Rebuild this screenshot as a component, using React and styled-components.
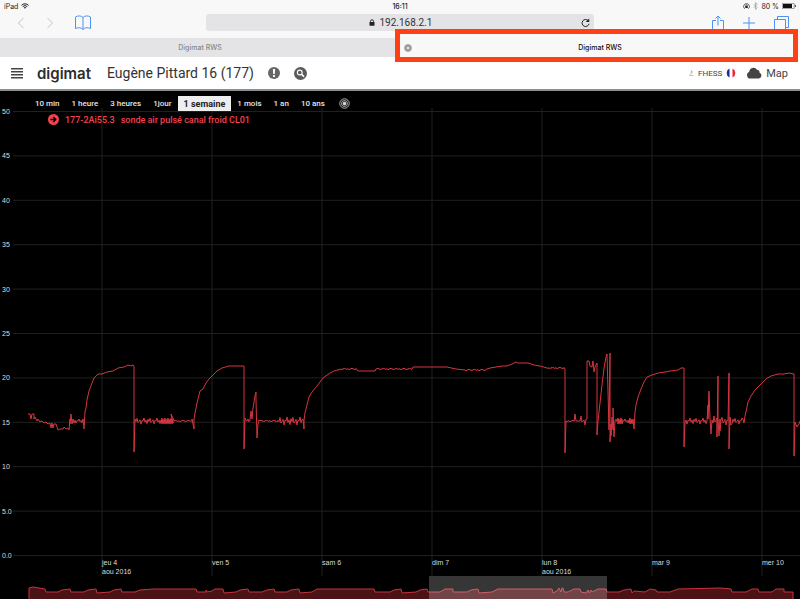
import React from 'react';
import styled, { createGlobalStyle, css } from 'styled-components';

const GlobalStyle = createGlobalStyle`
    * {
        box-sizing: border-box;
    }

    html {
        background: #000;
    }

    body {
        margin: 0;
        overflow: hidden;
        font-family: Roboto, "Liberation Sans", sans-serif;
        color: #333;
    }

    button, input {
        font-family: inherit;
        border: 0;
        padding: 0;
        margin: 0;
        background: none;
        color: inherit;
    }

    svg {
        display: block;
        flex: none;
    }
`;

const RANGES = ['10 min', '1 heure', '3 heures', '1jour', '1 semaine', '1 mois', '1 an', '10 ans'];

const DAYS = [
    { x: 102, label: 'jeu 4', month: 'aou 2016' },
    { x: 212, label: 'ven 5' },
    { x: 322, label: 'sam 6' },
    { x: 432, label: 'dim 7' },
    { x: 542, label: 'lun 8', month: 'aou 2016' },
    { x: 652, label: 'mar 9' },
    { x: 762, label: 'mer 10' },
];

const LEVELS = ['50', '45', '40', '35', '30', '25', '20', '15', '10', '5.0', '0.0'];

// small fluctuations of the sensor between x0 and x1
function ripple(x0, x1, y, amp, step = 1) {
    const wave = [0, -1, 0.4, -0.3, 0.9, -0.6, 0.2, -0.9, 0.5, 0.1, -0.4, 1, -0.2];
    let out = '';
    for (let x = x0, i = x0; x <= x1; x += step, i += 1) {
        out += ` ${x},${(y + wave[i % wave.length] * amp).toFixed(1)}`;
    }
    return out;
}

function dense(x0, x1, y, amp) {
    let out = '';
    for (let x = x0; x <= x1; x += 1) {
        out += ` ${x},${y - amp + (x % 3)} ${x},${y + amp - (x % 2)}`;
    }
    return out;
}

const SERIES = [
    '28,414 30,414 31,419 32,414 34,414 34,419 35,417 37,421 38,419 40,422 42,421 44,423 46,422 48,424 50,423 51,428 52,423 53,428 54,424 56,424 58,430 60,429 63,429 64,427 66,429 68,428 69,430 70,419 70,424 71,414 72,424 73,419 74,423',
    ripple(75, 82, 421, 2),
    '83,419 84,429 85,412 86,408 87,400 89,391 92,383 94,378 96,376 98,374 102,374 107,372 113,371 118,368 124,367 128,365 131,366 133,365 134,366 134,452 135,419',
    ripple(136, 160, 421, 3),
    dense(161, 173, 421, 3),
    '171,414',
    ripple(174, 192, 421, 1),
    '192,419 193,424 194,429 194,419 195,413 197,403 199,395 200,391 203,389 206,383 209,379 212,376 217,371 222,368 229,366 236,366 244,366 244,449 245,418',
    ripple(246, 249, 421, 2),
    '250,420 251,411 252,419 253,408 254,402 255,396 256,392 256,400 257,438 258,424 259,420',
    ripple(260, 278, 421, 1),
    ripple(279, 302, 421, 4),
    '303,419 304,429 304,420 305,413 307,405 309,397 312,392 317,386 323,378 330,373 334,371 341,369',
    ripple(342, 356, 369, 1),
    '358,371 375,371',
    ripple(376, 412, 369, 1),
    '413,367 440,367 447,367 456,369 465,370',
    ripple(466, 486, 370, 1),
    '490,368 496,367 502,366 507,366 512,364 516,362 518,363 528,363 534,365 540,366 547,368',
    ripple(548, 564, 368, 1),
    '565,369 565,453 566,421',
    ripple(567, 574, 421, 1),
    '575,414 576,421 580,421 581,416 582,422 584,420 585,425 586,419 587,419 587,361 589,361 590,366 592,367 593,361 594,372 595,367 597,363 597,380 597,435 598,421 600,403 602,385 604,368 606,357 607,354 608,392 609,430 609,421 610,353 610,442 611,424 611,436 612,417 613,430 613,408 614,437 615,421',
    ripple(616, 617, 421, 3),
    dense(618, 622, 421, 3),
    ripple(623, 628, 421, 2),
    dense(629, 632, 421, 3),
    '633,419 634,429 635,412 636,405 638,397 641,389 644,382 647,377 652,375 658,373 665,372 670,371 678,370 681,368 684,368 684,447 685,423 686,420',
    ripple(687, 706, 421, 3),
    '707,421 708,405 708,419 709,391 710,418 711,434 712,420 713,423 714,416 715,422 717,418 717,437 718,376 718,417 719,436 720,419 720,431 721,420',
    ripple(722, 728, 421, 4),
    '729,373 729,449 730,417 731,425',
    ripple(732, 742, 421, 3),
    '743,419 744,423 745,416 747,407 748,402 751,396 755,390 760,385 766,379 771,376 778,374 784,374 789,373 794,374 794,456 795,422 797,427 799,424 800,421',
].join(' ');

const OVERVIEW = `29,588 33,587 45,589 46,592 58,592 62,590 70,589 71,592 84,592 88,590 96,589 97,593
    110,592 114,590 121,589 122,592 135,592 140,590 153,589 196,589 197,592 206,592 206,590 207,592 212,591
    215,589 223,589 224,593 236,592 240,590 248,589 249,592 262,592 267,590 274,589 275,592 287,592 291,590
    299,589 300,593 312,592 317,589 374,589 375,592 390,592 394,590 401,589 402,593 416,592 420,590 427,589
    428,592 440,592 445,589 453,589 453,592 467,592 471,590 478,589 479,593 492,592 498,589 552,589 553,593
    557,591 559,588 561,592 562,588 563,588 564,592 568,592 574,589 580,589 581,592 586,593 588,590 589,593
    591,590 592,592 598,589 606,589 607,592 619,592 624,590 631,589 632,593 634,591 645,592 650,589 656,590
    657,592 670,592 678,589 720,588 731,589 732,592 746,592 752,589 758,589 759,592 772,592 776,589 784,589
    784,592 793,592`;

function StatusBar() {
    return (
        <StatusBarStyled>
            <StatusGroup>
                iPad
                <svg width="8" height="6" viewBox="0 0 16 12" fill="none" stroke="#222" strokeWidth="2">
                    <path d="M1 4.5a10 10 0 0 1 14 0M3.5 7.2a6.4 6.4 0 0 1 9 0" />
                    <path d="M5.5 9a3.6 3.6 0 0 1 5 0L8 11.6z" fill="#222" stroke="none" />
                </svg>
            </StatusGroup>
            <Clock>16:11</Clock>
            <StatusGroup $end>
                <svg width="7" height="7" viewBox="0 0 14 14" fill="none" stroke="#222" strokeWidth="1.4">
                    <path d="M3.5 11.6A5.8 5.8 0 1 1 10.5 11.6" />
                    <rect x="4.5" y="6" width="5" height="4" fill="#222" stroke="none" />
                    <path d="M5.5 6V5a1.5 1.5 0 0 1 3 0v1" />
                </svg>
                <svg width="5" height="8" viewBox="0 0 10 16" fill="none" stroke="#999" strokeWidth="1.4">
                    <path d="M1.5 4.5l7 7L5 15V1l3.5 3.5-7 7" />
                </svg>
                80 %
                <svg width="14" height="6" viewBox="0 0 28 12">
                    <rect x="0.5" y="0.5" width="24" height="11" rx="2" fill="none" stroke="#222" />
                    <rect x="2" y="2" width="18" height="8" fill="#111" />
                    <path d="M26 4v4l2-1V5z" fill="#222" />
                </svg>
            </StatusGroup>
        </StatusBarStyled>
    );
}

function BrowserBar() {
    return (
        <BrowserBarStyled>
            <NavButtons>
                <IconButton aria-label="Back">
                    <svg width="8" height="12" viewBox="0 0 8 12" fill="none" stroke="#c4c4c6">
                        <path d="M6.5 1L1.5 6l5 5" />
                    </svg>
                </IconButton>
                <IconButton aria-label="Forward">
                    <svg width="8" height="12" viewBox="0 0 8 12" fill="none" stroke="#c4c4c6">
                        <path d="M1.5 1l5 5-5 5" />
                    </svg>
                </IconButton>
                <IconButton aria-label="Bookmarks">
                    <svg width="16" height="16" viewBox="0 0 16 16" fill="none" stroke="#4a93f5">
                        <path d="M8 2.500C6.500.5 2.500.5.5 2v11.500C3 12.300 6.500 12.300 8 14.500c1.500-2.200 5-2.200 7.500-1V2C13.500.5 9.500.5 8 2.500zv12" />
                    </svg>
                </IconButton>
            </NavButtons>
            <AddressBar>
                <svg width="6" height="7" viewBox="0 0 12 14">
                    <rect x="1" y="6" width="10" height="7.5" rx="1" fill="#222" />
                    <path d="M3 7V4.5a3 3 0 0 1 6 0V7" fill="none" stroke="#222" strokeWidth="1.8" />
                </svg>
                <AddressInput aria-label="Address" defaultValue="192.168.2.1" />
                <Reload aria-label="Reload">
                    <svg width="9" height="10" viewBox="0 0 18 20" fill="none" stroke="#222" strokeWidth="2">
                        <path d="M14.5 5.5a7 7 0 1 0 1.5 6" />
                        <path d="M16.5 1v7h-7z" fill="#222" stroke="none" />
                    </svg>
                </Reload>
            </AddressBar>
            <PageActions>
                <IconButton aria-label="Share">
                    <svg width="12" height="16" viewBox="0 0 12 16" fill="none" stroke="#4a93f5">
                        <path d="M4 5.5H.5v10h11v-10H8M6 10.5V1M3.5 3.5L6 1l2.5 2.5" />
                    </svg>
                </IconButton>
                <IconButton aria-label="New tab">
                    <svg width="12" height="12" viewBox="0 0 12 12" fill="none" stroke="#4a93f5">
                        <path d="M6 0v12M0 6h12" />
                    </svg>
                </IconButton>
                <IconButton aria-label="Show tabs">
                    <svg width="15" height="15" viewBox="0 0 15 15" fill="none" stroke="#4a93f5">
                        <path d="M.5 3.5h11v11H.5zM3.5 3.5v-3h11v11h-3" />
                    </svg>
                </IconButton>
            </PageActions>
        </BrowserBarStyled>
    );
}

function Header() {
    return (
        <HeaderStyled>
            <IconButton aria-label="Menu">
                <svg width="12" height="12" viewBox="0 0 24 24" fill="#444">
                    <path d="M0 2h24v3H0zM0 8h24v3H0zM0 14h24v3H0zM0 20h24v3H0z" />
                </svg>
            </IconButton>
            <Logo>digimat</Logo>
            <Title>Eugène Pittard 16 (177)</Title>
            <HeaderTools>
                <IconButton aria-label="Alerts">
                    <svg width="12" height="12" viewBox="0 0 24 24">
                        <circle cx="12" cy="12" r="12" fill="#666" />
                        <path d="M9.8 4h4.4l-.6 10h-3.2zM10.2 16h3.600v4h-3.6z" fill="#fff" />
                    </svg>
                </IconButton>
                <IconButton aria-label="Search">
                    <svg width="13" height="13" viewBox="0 0 26 26" fill="none" stroke="#fff">
                        <circle cx="13" cy="13" r="13" fill="#5a5a5a" stroke="none" />
                        <circle cx="11.5" cy="11" r="4.8" strokeWidth="2.2" />
                        <path d="M15 14.5l5 5" strokeWidth="3.4" />
                    </svg>
                </IconButton>
            </HeaderTools>
            <User>
                <svg width="5" height="6" viewBox="0 0 10 12" fill="none" stroke="#aaa" strokeWidth="1.4">
                    <path d="M5 1v5M5 1l2 3-2 3M5 6L1 11h8" />
                </svg>
                <span>FHESS</span>
                <svg width="10" height="10" viewBox="0 0 20 20">
                    <path d="M7 1a10 10 0 0 0 0 18z" fill="#1b2a8c" />
                    <path d="M13 1a10 10 0 0 1 0 18z" fill="#ee2436" />
                </svg>
            </User>
            <MapLink href="#map">
                <svg width="15" height="12" viewBox="0 0 30 24" fill="#444">
                    <path d="M7 23a7 7 0 0 1-2.5-13.5A8.5 8.5 0 0 1 20 5.5a5 5 0 0 1 5 6A6 6 0 0 1 24 23z" />
                </svg>
                Map
            </MapLink>
        </HeaderStyled>
    );
}

function Chart() {
    return (
        <ChartSvg viewBox="0 91 800 508" role="img" aria-label="sonde air pulsé canal froid CL01">
            <GridLines>
                {LEVELS.map((level, i) => (
                    <line key={level} x1="13" x2="800" y1={111.5 + i * 44.4} y2={111.5 + i * 44.4} />
                ))}
                {DAYS.map((day) => (
                    <line key={day.x} x1={day.x} x2={day.x} y1="108" y2="576" />
                ))}
            </GridLines>
            {LEVELS.map((level, i) => (
                <AxisText key={level} x="2" y={114 + i * 44.4}>{level}</AxisText>
            ))}
            {DAYS.map((day) => (
                <AxisText key={day.x} x={day.x} y="565">
                    {day.label}
                    {day.month && <tspan x={day.x} y="574">{day.month}</tspan>}
                </AxisText>
            ))}
            <Curve points={SERIES} />
            <OverviewArea points={`29,599 ${OVERVIEW} 793,599`} />
            <OverviewLine points={`29,599 ${OVERVIEW} 793,599`} />
            <rect x="429" y="576" width="178" height="23" fill="#fff" fillOpacity="0.21" />
        </ChartSvg>
    );
}

export default function App() {
    return (
        <>
            <GlobalStyle />
            <Chrome>
                <StatusBar />
                <BrowserBar />
                <Tabs>
                    <Tab>
                        <TabButton>Digimat RWS</TabButton>
                    </Tab>
                    <Tab $active>
                        <CloseTab aria-label="Close tab">
                            <svg width="8" height="8" viewBox="0 0 16 16">
                                <circle cx="8" cy="8" r="7.5" fill="#999" />
                                <path d="M5 5l6 6M11 5l-6 6" stroke="#f7f7f7" strokeWidth="1.6" />
                            </svg>
                        </CloseTab>
                        <TabButton>Digimat RWS</TabButton>
                        <TabFrame />
                    </Tab>
                </Tabs>
            </Chrome>
            <Header />
            <Panel>
                <Chart />
                <PanelOverlay>
                    <Ranges>
                        {RANGES.map((range) => (
                            <RangeButton key={range} $active={range === '1 semaine'}>{range}</RangeButton>
                        ))}
                        <TargetButton aria-label="Now">
                            <svg width="11" height="11" viewBox="0 0 22 22" fill="none" stroke="#ddd" strokeWidth="1.6">
                                <circle cx="11" cy="11" r="9.5" />
                                <circle cx="11" cy="11" r="6" />
                                <circle cx="11" cy="11" r="3" fill="#ddd" />
                            </svg>
                        </TargetButton>
                    </Ranges>
                    <Legend>
                        <svg width="11" height="11" viewBox="0 0 22 22">
                            <circle cx="11" cy="11" r="11" fill="#f5404f" />
                            <path d="M5 11h10M10.5 6l5 5-5 5" fill="none" stroke="#000" strokeWidth="2.8" />
                        </svg>
                        <span>177-2Ai55.3</span>
                        <span>sonde air pulsé canal froid CL01</span>
                    </Legend>
                </PanelOverlay>
            </Panel>
        </>
    );
}

const Chrome = styled.div`
    background: #f8f8f8;
`;

const StatusBarStyled = styled.div`
    display: grid;
    grid-template-columns: 1fr auto 1fr;
    align-items: center;
    height: 12px;
    padding: 0 4px;
    font-family: Inter, sans-serif;
    font-size: 7px;
    color: #222;
`;

const StatusGroup = styled.div`
    display: flex;
    align-items: center;
    gap: 3px;
    justify-content: ${(p) => (p.$end ? 'flex-end' : 'flex-start')};
`;

const Clock = styled.div`
    font-weight: 500;
`;

const BrowserBarStyled = styled.div`
    display: grid;
    grid-template-columns: 1fr 2fr 1fr;
    height: 26px;
    padding: 2px 0 6px;
`;

const IconButton = styled.button`
    display: flex;
    align-items: center;
    justify-content: center;
    cursor: pointer;
`;

const NavButtons = styled.div`
    display: flex;
    align-items: center;
    gap: 21px;
    padding-left: 17px;
`;

const PageActions = styled.div`
    display: flex;
    align-items: center;
    justify-content: flex-end;
    gap: 19px;
    padding-right: 11px;
`;

const AddressBar = styled.div`
    position: relative;
    display: flex;
    align-items: center;
    justify-content: center;
    gap: 5px;
    height: 17px;
    margin: 0 6px;
    border-radius: 3px;
    background: #e4e4e6;
    font-size: 10px;
`;

const AddressInput = styled.input`
    width: 52px;
    font-size: 10px;
    outline: none;
`;

const Reload = styled(IconButton)`
    position: absolute;
    right: 4px;
`;

const Tabs = styled.div`
    display: flex;
`;

const Tab = styled.div`
    position: relative;
    flex: 1;
    display: flex;
    align-items: center;
    height: 19px;
    color: #888;
    background: #e4e4e6;

    ${(p) => p.$active && css`
        color: #111;
        background: #f8f8f8;
    `}
`;

const TabButton = styled.button`
    flex: 1;
    font-family: Inter, sans-serif;
    font-size: 7px;
    font-weight: ${(p) => (p.$active ? 600 : 500)};
    cursor: pointer;
`;

const CloseTab = styled(IconButton)`
    position: absolute;
    left: 4px;
`;

const TabFrame = styled.div`
    position: absolute;
    z-index: 2;
    top: -9px;
    right: 2px;
    bottom: -5px;
    left: -5px;
    border: 5px solid #ff3f14;
    pointer-events: none;
`;

const HeaderStyled = styled.header`
    display: flex;
    align-items: center;
    height: 34px;
    padding: 0 12px 0 11px;
    background: #fff;
    border-bottom: 2px solid #8a8f8f;
`;

const Logo = styled.div`
    margin: 0 16px 0 14px;
    font-family: Inter, sans-serif;
    font-size: 15px;
    font-weight: 600;
    color: #2c2c2c;
`;

const Title = styled.h1`
    margin: 0;
    font-size: 14px;
    font-weight: 400;
    white-space: nowrap;
`;

const HeaderTools = styled.div`
    display: flex;
    gap: 14px;
    margin-left: 14px;
`;

const User = styled.div`
    display: flex;
    align-items: center;
    gap: 4px;
    margin-left: auto;
    font-size: 8px;
    color: #444;
`;

const MapLink = styled.a`
    display: flex;
    align-items: center;
    gap: 4px;
    margin-left: 11px;
    font-size: 11px;
    color: #444;
    text-decoration: none;
`;

const Panel = styled.main`
    position: relative;
    background: #000;
`;

const ChartSvg = styled.svg`
    width: 100%;
`;

const GridLines = styled.g`
    stroke: #202020;
    stroke-width: 1;
`;

const AxisText = styled.text`
    font-family: "Liberation Sans", Arial, sans-serif;
    font-size: 7px;
    fill: #ddd;
`;

const Curve = styled.polyline`
    fill: none;
    stroke: #d53640;
    stroke-width: 1;
    stroke-linejoin: bevel;
`;

const OverviewArea = styled.polygon`
    fill: #4c1317;
`;

const OverviewLine = styled.polyline`
    fill: none;
    stroke: #c9333d;
`;

const PanelOverlay = styled.div`
    position: absolute;
    top: 5px;
    left: 29px;
`;

const Ranges = styled.div`
    display: flex;
    align-items: center;
`;

const RangeButton = styled.button`
    height: 15px;
    padding: 0 6px;
    font-size: 8px;
    font-weight: 500;
    color: #e6e6e6;
    white-space: nowrap;
    cursor: pointer;

    ${(p) => p.$active && css`
        color: #222;
        background: #eee;
        font-size: 9px;
        font-weight: 700;
    `}
`;

const TargetButton = styled(IconButton)`
    margin-left: 8px;
`;

const Legend = styled.div`
    display: flex;
    align-items: center;
    gap: 6px;
    margin-top: 3px;
    padding-left: 19px;
    font-size: 9px;
    font-weight: 500;
    color: #f5404f;
`;
